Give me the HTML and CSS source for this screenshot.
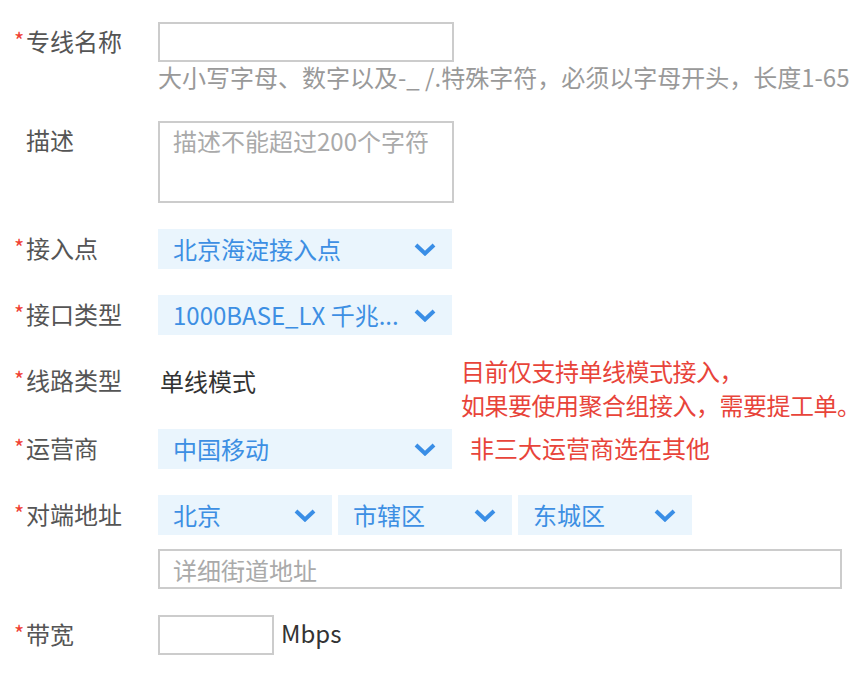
FILE: index.html
```html
<!DOCTYPE html>
<html lang="zh-CN">
<head>
    <meta charset="UTF-8">
    <meta name="viewport" content="width=device-width, initial-scale=1.0">
    <title>新建专线</title>
    <link rel="stylesheet" href="styles.css">
</head>
<body>
    <form class="form">
        <div class="row row-name">
            <label class="label required">专线名称</label>
            <div class="field">
                <input class="input input-wide" type="text">
                <p class="hint">大小写字母、数字以及-_ /.特殊字符，必须以字母开头，长度1-65</p>
            </div>
        </div>

        <div class="row">
            <label class="label">描述</label>
            <div class="field">
                <textarea class="textarea" placeholder="描述不能超过200个字符"></textarea>
            </div>
        </div>

        <div class="row">
            <label class="label required">接入点</label>
            <div class="select">
                <span class="select-text">北京海淀接入点</span>
                <svg class="chevron" viewBox="0 0 22 13"><path d="M2 2 L11 10.5 L20 2"/></svg>
            </div>
        </div>

        <div class="row">
            <label class="label required">接口类型</label>
            <div class="select">
                <span class="select-text">1000BASE_LX 千兆...</span>
                <svg class="chevron" viewBox="0 0 22 13"><path d="M2 2 L11 10.5 L20 2"/></svg>
            </div>
        </div>

        <div class="row">
            <label class="label required">线路类型</label>
            <div class="static">单线模式</div>
            <p class="note note-line">目前仅支持单线模式接入，<br>如果要使用聚合组接入，需要提工单。</p>
        </div>

        <div class="row">
            <label class="label required">运营商</label>
            <div class="select">
                <span class="select-text">中国移动</span>
                <svg class="chevron" viewBox="0 0 22 13"><path d="M2 2 L11 10.5 L20 2"/></svg>
            </div>
            <p class="note note-isp">非三大运营商选在其他</p>
        </div>

        <div class="row">
            <label class="label required">对端地址</label>
            <div class="field">
                <div class="region">
                    <div class="select select-small">
                        <span class="select-text">北京</span>
                        <svg class="chevron" viewBox="0 0 22 13"><path d="M2 2 L11 10.5 L20 2"/></svg>
                    </div>
                    <div class="select select-small">
                        <span class="select-text">市辖区</span>
                        <svg class="chevron" viewBox="0 0 22 13"><path d="M2 2 L11 10.5 L20 2"/></svg>
                    </div>
                    <div class="select select-small">
                        <span class="select-text">东城区</span>
                        <svg class="chevron" viewBox="0 0 22 13"><path d="M2 2 L11 10.5 L20 2"/></svg>
                    </div>
                </div>
                <input class="input input-address" type="text" placeholder="详细街道地址">
            </div>
        </div>

        <div class="row">
            <label class="label required">带宽</label>
            <input class="input input-bandwidth" type="text">
            <span class="unit">Mbps</span>
        </div>
    </form>
</body>
</html>
```

FILE: styles.css
```css
/* Base */
html, body {
    overflow-x: hidden;
}

body {
    margin: 0;
    background: #fff;
    font-family: "Noto Sans CJK SC", "Noto Sans", sans-serif;
    font-size: 24px;
    color: #333;
}

.form {
    padding-top: 22px;
}

/* Rows */
.row {
    display: flex;
    align-items: flex-start;
    margin-bottom: 26px;
}

.row-name {
    margin-bottom: 29px;
}

.label {
    flex: none;
    width: 132px;
    padding-left: 26px;
    height: 40px;
    line-height: 38px;
    color: #555;
    white-space: nowrap;
}

.label.required {
    padding-left: 13px;
    width: 145px;
}

.label.required::before {
    content: "*";
    display: inline-block;
    width: 13px;
    padding-left: 1px;
    box-sizing: border-box;
    color: #f04134;
    font-size: 22px;
    line-height: 20px;
    vertical-align: 2px;
}

.field {
    display: flex;
    flex-direction: column;
}

/* Inputs */
.input,
.textarea {
    box-sizing: border-box;
    margin: 0;
    border: 2px solid #ccc;
    border-radius: 0;
    background: #fff;
    font-family: inherit;
    font-size: 24px;
    color: #333;
    outline: none;
}

.input {
    height: 40px;
    padding: 0 13px;
}

.input-wide {
    width: 296px;
}

.input-address {
    width: 684px;
    margin-top: 14px;
}

.input-bandwidth {
    width: 116px;
}

.input::placeholder,
.textarea::placeholder {
    color: #aaa;
}

.textarea {
    width: 296px;
    height: 82px;
    padding: 3px 13px;
    line-height: 30px;
    resize: none;
}

.hint {
    margin: 0;
    height: 30px;
    line-height: 30px;
    color: #999;
    white-space: nowrap;
}

/* Selects */
.select {
    flex: none;
    box-sizing: border-box;
    width: 294px;
    height: 40px;
    display: flex;
    align-items: center;
    padding: 0 16px 0 15px;
    background: #eaf5fd;
    color: #3d8fe3;
}

.select-text {
    flex: 1;
    min-width: 0;
    overflow: hidden;
    white-space: nowrap;
    text-overflow: ellipsis;
    line-height: 40px;
    margin-right: 8px;
}

.chevron {
    flex: none;
    width: 22px;
    height: 13px;
    fill: none;
    stroke: #3a8ee6;
    stroke-width: 4;
    stroke-linejoin: miter;
}

.region {
    display: flex;
    gap: 6px;
}

.select-small {
    width: 174px;
}

/* Static text and notes */
.static {
    flex: none;
    width: 296px;
    padding-left: 2px;
    box-sizing: border-box;
    height: 42px;
    line-height: 40px;
    color: #333;
}

.note {
    margin: 0;
    color: #e8443a;
    white-space: nowrap;
}

.note-line {
    margin-top: -7px;
    margin-bottom: -19px;
    margin-left: 7px;
    line-height: 34px;
    letter-spacing: -0.5px;
}

.note-isp {
    margin-left: 18px;
    line-height: 38px;
}

.unit {
    margin-left: 7px;
    line-height: 36px;
    color: #333;
}
```
